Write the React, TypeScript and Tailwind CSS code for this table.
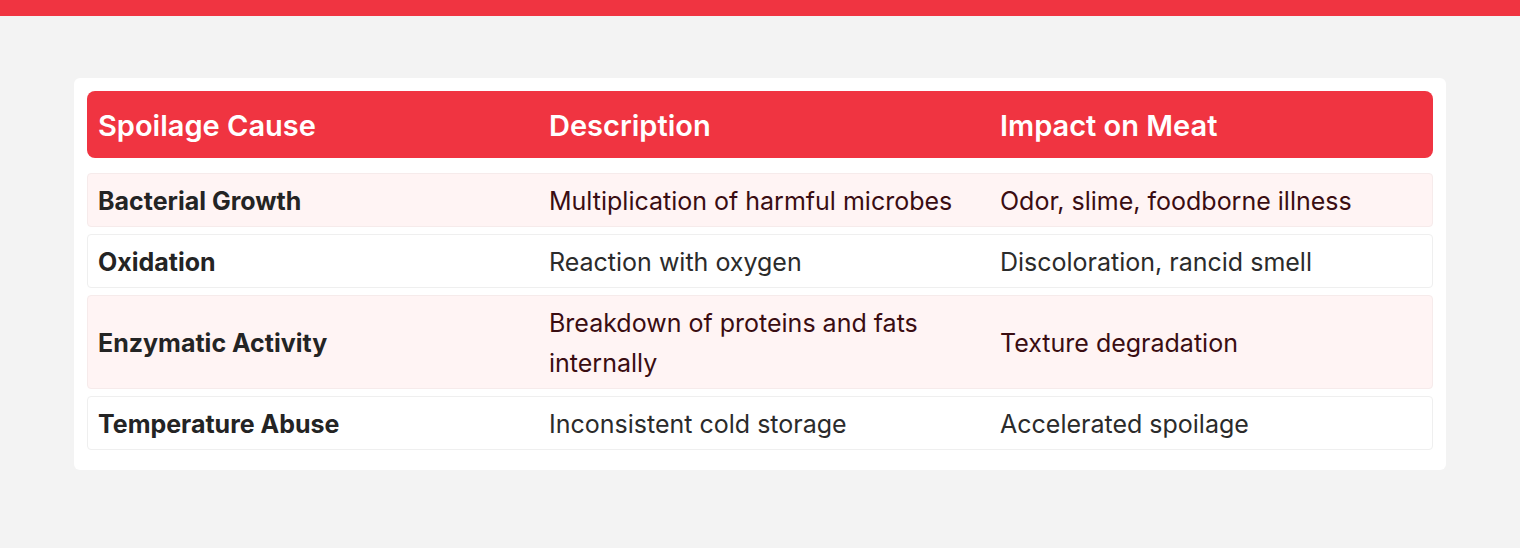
const rows = [
  {
    cause: 'Bacterial Growth',
    description: 'Multiplication of harmful microbes',
    impact: 'Odor, slime, foodborne illness',
    tinted: true,
  },
  {
    cause: 'Oxidation',
    description: 'Reaction with oxygen',
    impact: 'Discoloration, rancid smell',
    tinted: false,
  },
  {
    cause: 'Enzymatic Activity',
    description: 'Breakdown of proteins and fats internally',
    impact: 'Texture degradation',
    tinted: true,
  },
  {
    cause: 'Temperature Abuse',
    description: 'Inconsistent cold storage',
    impact: 'Accelerated spoilage',
    tinted: false,
  },
]

export default function App() {
  return (
    <div
      className="min-h-[548px] bg-[#f3f3f3]"
      style={{ fontFamily: 'Inter, "Noto Sans", sans-serif' }}
    >
      <div className="h-4 bg-[#f03441]" />

      <main className="px-[74px] pt-[62px]">
        <section className="rounded-md bg-white px-[13px] pb-5 pt-[13px]">
          <div className="mb-[15px] grid h-[67px] grid-cols-[451px_451px_1fr] items-center rounded-lg bg-[#f03441] pt-0.5 text-[29px] font-semibold text-white">
            <span className="pl-[11px]">Spoilage Cause</span>
            <span className="pl-[11px]">Description</span>
            <span className="pl-[11px]">Impact on Meat</span>
          </div>

          <div className="flex flex-col gap-[7px]">
            {rows.map(row => (
              <div
                key={row.cause}
                className={
                  row.tinted
                    ? 'grid grid-cols-[451px_451px_1fr] items-center rounded border border-[#f6ebeb] bg-[#fff4f4] pb-[5px] pt-[7px] text-[25px] leading-[40px] text-[#3a0d12]'
                    : 'grid grid-cols-[451px_451px_1fr] items-center rounded border border-[#efefef] bg-white pb-[5px] pt-[7px] text-[25px] leading-[40px] text-[#2b2b2b]'
                }
              >
                <span className="pl-[10px] pr-4 font-bold text-[#242424]">{row.cause}</span>
                <span className="pl-[10px] pr-4">{row.description}</span>
                <span className="pl-[10px] pr-4">{row.impact}</span>
              </div>
            ))}
          </div>
        </section>
      </main>
    </div>
  )
}
